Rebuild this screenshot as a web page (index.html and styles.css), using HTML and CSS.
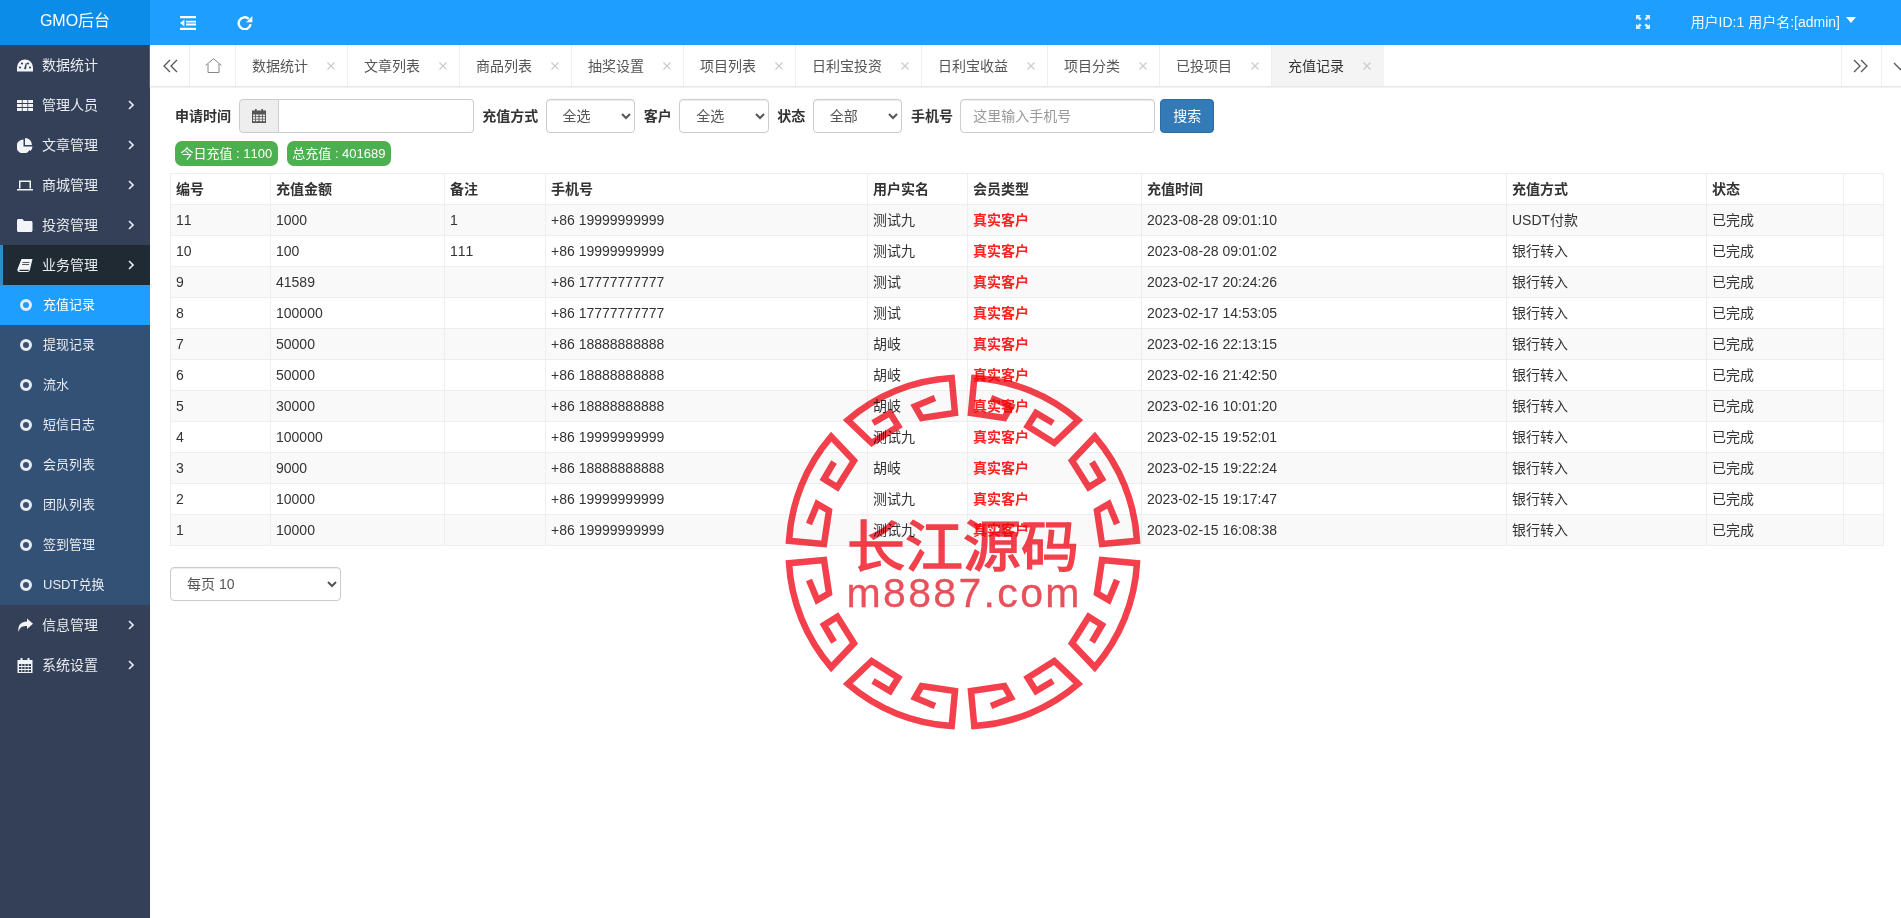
FILE: index.html
```html
<!DOCTYPE html>
<html lang="zh">
<head>
<meta charset="utf-8">
<title>GMO后台</title>
<link rel="stylesheet" href="styles.css">
</head>
<body>
<header class="topbar">
  <div class="logo">GMO后台</div>
  <button class="top-btn first-btn" type="button">
    <svg class="top-ico" viewBox="0 0 16 14"><path d="M0 0h16v2.200H0zM0 11.800h16V14H0zM6 4.700h10v1.900H6zM6 7.600h10v1.900H6zM4.400 3.600v6.800L0 7z"/></svg>
  </button>
  <button class="top-btn" type="button">
    <svg class="top-ico" viewBox="0 0 16 14"><path class="ico-arc" d="M13.600 8.300A6 6 0 1 1 11.800 2.900"/><path d="M15.400 0v6.300H9.200z"/></svg>
  </button>
  <div class="top-right">
    <svg class="full-ico" viewBox="0 0 14 14"><path d="M0 0h5L3.400 1.600 5.600 3.800 3.800 5.600 1.600 3.400 0 5zM14 0v5l-1.600-1.600-2.200 2.200-1.800-1.800 2.200-2.200L9 0zM0 14V9l1.600 1.600 2.200-2.200 1.800 1.800-2.200 2.200L5 14zM14 14H9l1.600-1.600-2.200-2.200 1.800-1.800 2.200 2.200L14 9z"/></svg>
    <span class="user">用户ID:1 用户名:[admin]</span>
    <span class="caret"></span>
  </div>
</header>
<div class="layout">
  <nav class="sidebar">
    <a class="nav-item"><svg class="ico" viewBox="0 0 16 12"><path d="M0 12C-.4 11 0 9.500 0 8a8 8 0 0 1 16 0c0 1.500.4 3 0 4z"/><circle class="cut" cx="3" cy="8" r="1.100"/><circle class="cut" cx="5" cy="4" r="1.100"/><circle class="cut" cx="11" cy="4" r="1.100"/><circle class="cut" cx="13" cy="8" r="1.100"/><path class="cut" d="M7 9.500 8.800 3.500 9.800 3.800 9 9.800z"/></svg><span>数据统计</span></a>
    <a class="nav-item"><svg class="ico" viewBox="0 0 16 11"><path d="M0 0h4.800v3H0zM5.600 0h4.800v3H5.600zM11.200 0H16v3h-4.800zM0 4h4.800v3H0zM5.600 4h4.800v3H5.600zM11.200 4H16v3h-4.800zM0 8h4.800v3H0zM5.600 8h4.800v3H5.600zM11.200 8H16v3h-4.800z"/></svg><span>管理人员</span><svg class="chev" viewBox="0 0 6 10"><path d="M1 1l4 4-4 4"/></svg></a>
    <a class="nav-item"><svg class="ico" viewBox="0 0 16 15"><path d="M6.500 1.500v7h7A7 7 0 1 1 6.500 1.500zM8 0a7 7 0 0 1 7 7H8zM8.500 8.500H15.500A7 7 0 0 1 13.500 13z"/></svg><span>文章管理</span><svg class="chev" viewBox="0 0 6 10"><path d="M1 1l4 4-4 4"/></svg></a>
    <a class="nav-item"><svg class="ico" viewBox="0 0 16 10"><path d="M2 0h12v8h-1.500V1.500h-9V8H2zM0 8.500h16V10H0z"/></svg><span>商城管理</span><svg class="chev" viewBox="0 0 6 10"><path d="M1 1l4 4-4 4"/></svg></a>
    <a class="nav-item"><svg class="ico" viewBox="0 0 16 13"><path d="M1.500 0h4L7 2h7c.8 0 1.500.7 1.500 1.500v8c0 .8-.7 1.500-1.500 1.500H1.500C.7 13 0 12.300 0 11.500v-10C0 .7.700 0 1.500 0z"/></svg><span>投资管理</span><svg class="chev" viewBox="0 0 6 10"><path d="M1 1l4 4-4 4"/></svg></a>
    <a class="nav-item nav-open"><svg class="ico" viewBox="0 0 16 13"><path d="M4.500 0H15.500L13 10.500c-.3 1.500-1 2.500-2.500 2.500H2.500C.8 13 0 11.500.5 10zM3 10.800c-.8 0-1 1.200 0 1.200h8c.6 0 .8-.5 1-1.200z"/><path class="cut" d="M5.500 3h7v.8h-7zM5 5h7v.8H5z"/></svg><span>业务管理</span><svg class="chev" viewBox="0 0 6 10"><path d="M1 1l4 4-4 4"/></svg></a>
    <div class="submenu">
      <a class="sub-item sub-active"><i class="ring"></i>充值记录</a>
      <a class="sub-item"><i class="ring"></i>提现记录</a>
      <a class="sub-item"><i class="ring"></i>流水</a>
      <a class="sub-item"><i class="ring"></i>短信日志</a>
      <a class="sub-item"><i class="ring"></i>会员列表</a>
      <a class="sub-item"><i class="ring"></i>团队列表</a>
      <a class="sub-item"><i class="ring"></i>签到管理</a>
      <a class="sub-item"><i class="ring"></i>USDT兑换</a>
    </div>
    <a class="nav-item"><svg class="ico" viewBox="0 0 16 14"><path d="M10 0l6 5.200-6 5.200V7.500C6 7.500 2.500 8 1.800 13.500.2 8.500 3 3.200 10 3.100z"/></svg><span>信息管理</span><svg class="chev" viewBox="0 0 6 10"><path d="M1 1l4 4-4 4"/></svg></a>
    <a class="nav-item"><svg class="ico" viewBox="0 0 15 15"><path fill-rule="evenodd" d="M3 0h2v2h5V0h2v2h3v13H0V2h3zM1.500 6v2h2.400V6zM4.700 6v2h2.400V6zM7.900 6v2h2.400V6zM11.100 6v2h2.400V6zM1.500 9v2h2.400V9zM4.700 9v2h2.400V9zM7.900 9v2h2.400V9zM11.100 9v2h2.400V9zM1.500 12v2h2.400v-2zM4.700 12v2h2.400v-2zM7.900 12v2h2.400v-2zM11.100 12v2h2.400v-2z"/></svg><span>系统设置</span><svg class="chev" viewBox="0 0 6 10"><path d="M1 1l4 4-4 4"/></svg></a>
  </nav>
  <main class="main">
    <div class="tabs">
      <div class="tab-tool tool-prev"><svg class="dbl" viewBox="0 0 15 14"><path d="M7 1 1 7l6 6M14 1 8 7l6 6"/></svg></div>
      <div class="tab-home"><svg class="home" viewBox="0 0 17 15"><path d="M.5 7.500 8.500.7l8 6.800M3 6v8.500h11V6"/></svg></div>
      <div class="tab">数据统计<svg class="x" viewBox="0 0 8 8"><path d="M.5.500l7 7M7.500.500l-7 7"/></svg></div>
      <div class="tab">文章列表<svg class="x" viewBox="0 0 8 8"><path d="M.5.500l7 7M7.500.500l-7 7"/></svg></div>
      <div class="tab">商品列表<svg class="x" viewBox="0 0 8 8"><path d="M.5.500l7 7M7.500.500l-7 7"/></svg></div>
      <div class="tab">抽奖设置<svg class="x" viewBox="0 0 8 8"><path d="M.5.500l7 7M7.500.500l-7 7"/></svg></div>
      <div class="tab">项目列表<svg class="x" viewBox="0 0 8 8"><path d="M.5.500l7 7M7.500.500l-7 7"/></svg></div>
      <div class="tab">日利宝投资<svg class="x" viewBox="0 0 8 8"><path d="M.5.500l7 7M7.500.500l-7 7"/></svg></div>
      <div class="tab">日利宝收益<svg class="x" viewBox="0 0 8 8"><path d="M.5.500l7 7M7.500.500l-7 7"/></svg></div>
      <div class="tab">项目分类<svg class="x" viewBox="0 0 8 8"><path d="M.5.500l7 7M7.500.500l-7 7"/></svg></div>
      <div class="tab">已投项目<svg class="x" viewBox="0 0 8 8"><path d="M.5.500l7 7M7.500.500l-7 7"/></svg></div>
      <div class="tab tab-active">充值记录<svg class="x" viewBox="0 0 8 8"><path d="M.5.500l7 7M7.500.500l-7 7"/></svg></div>
      <div class="tab-tool tool-next"><svg class="dbl" viewBox="0 0 15 14"><path d="M1 1l6 6-6 6M8 1l6 6-6 6"/></svg></div>
      <div class="tab-tool tool-down"><svg class="dbl" viewBox="0 0 15 14"><path d="M1 4l6.500 6.500L14 4"/></svg></div>
    </div>
    <section class="content">
      <form class="filters">
        <label class="flabel flabel-first">申请时间</label>
        <div class="date-group">
          <span class="addon"><svg class="cal" viewBox="0 0 14 14"><path fill-rule="evenodd" d="M3 0h1.600v1.600h4.800V0H11v1.600h3V14H0V1.600h3zM1 5.500v1.700h2.200V5.500zM4 5.500v1.700h2.500V5.500zM7.500 5.500v1.700H10V5.500zM10.800 5.500v1.700H13V5.500zM1 8v1.700h2.200V8zM4 8v1.700h2.500V8zM7.500 8v1.700H10V8zM10.800 8v1.700H13V8zM1 10.500v1.700h2.200v-1.700zM4 10.500v1.700h2.500v-1.700zM7.500 10.500v1.700H10v-1.700zM10.800 10.500v1.700H13v-1.700z"/></svg></span>
          <input class="date-input" type="text">
        </div>
        <label class="flabel">充值方式</label>
        <select class="control sel"><option>全选</option></select>
        <label class="flabel">客户</label>
        <select class="control sel"><option>全选</option></select>
        <label class="flabel">状态</label>
        <select class="control sel"><option>全部</option></select>
        <label class="flabel">手机号</label>
        <input class="control phone" type="text" placeholder="这里输入手机号">
        <button class="search" type="button">搜索</button>
      </form>
      <div class="badges">
        <span class="badge">今日充值 : 1100</span>
        <span class="badge">总充值 : 401689</span>
      </div>
      <table class="grid">
        <colgroup><col class="c1"><col class="c2"><col class="c3"><col class="c4"><col class="c5"><col class="c6"><col class="c7"><col class="c8"><col class="c9"><col class="c10"></colgroup>
        <thead><tr><th>编号</th><th>充值金额</th><th>备注</th><th>手机号</th><th>用户实名</th><th>会员类型</th><th>充值时间</th><th>充值方式</th><th>状态</th><th></th></tr></thead>
        <tbody>
          <tr><td>11</td><td>1000</td><td>1</td><td>+86 19999999999</td><td>测试九</td><td class="real">真实客户</td><td>2023-08-28 09:01:10</td><td>USDT付款</td><td>已完成</td><td></td></tr>
          <tr><td>10</td><td>100</td><td>111</td><td>+86 19999999999</td><td>测试九</td><td class="real">真实客户</td><td>2023-08-28 09:01:02</td><td>银行转入</td><td>已完成</td><td></td></tr>
          <tr><td>9</td><td>41589</td><td></td><td>+86 17777777777</td><td>测试</td><td class="real">真实客户</td><td>2023-02-17 20:24:26</td><td>银行转入</td><td>已完成</td><td></td></tr>
          <tr><td>8</td><td>100000</td><td></td><td>+86 17777777777</td><td>测试</td><td class="real">真实客户</td><td>2023-02-17 14:53:05</td><td>银行转入</td><td>已完成</td><td></td></tr>
          <tr><td>7</td><td>50000</td><td></td><td>+86 18888888888</td><td>胡岐</td><td class="real">真实客户</td><td>2023-02-16 22:13:15</td><td>银行转入</td><td>已完成</td><td></td></tr>
          <tr><td>6</td><td>50000</td><td></td><td>+86 18888888888</td><td>胡岐</td><td class="real">真实客户</td><td>2023-02-16 21:42:50</td><td>银行转入</td><td>已完成</td><td></td></tr>
          <tr><td>5</td><td>30000</td><td></td><td>+86 18888888888</td><td>胡岐</td><td class="real">真实客户</td><td>2023-02-16 10:01:20</td><td>银行转入</td><td>已完成</td><td></td></tr>
          <tr><td>4</td><td>100000</td><td></td><td>+86 19999999999</td><td>测试九</td><td class="real">真实客户</td><td>2023-02-15 19:52:01</td><td>银行转入</td><td>已完成</td><td></td></tr>
          <tr><td>3</td><td>9000</td><td></td><td>+86 18888888888</td><td>胡岐</td><td class="real">真实客户</td><td>2023-02-15 19:22:24</td><td>银行转入</td><td>已完成</td><td></td></tr>
          <tr><td>2</td><td>10000</td><td></td><td>+86 19999999999</td><td>测试九</td><td class="real">真实客户</td><td>2023-02-15 19:17:47</td><td>银行转入</td><td>已完成</td><td></td></tr>
          <tr><td>1</td><td>10000</td><td></td><td>+86 19999999999</td><td>测试九</td><td class="real">真实客户</td><td>2023-02-15 16:08:38</td><td>银行转入</td><td>已完成</td><td></td></tr>
        </tbody>
      </table>
      <select class="control per-page"><option>每页 10</option></select>
    </section>
  </main>
</div>
<svg class="stamp" viewBox="-180 -180 360 360">
  <defs>
    <path id="key" d="M-28-154-48-145.700-41.300-134-8-139-11.300-174A174.500 174.500 0 0 0-115.300-131.800L-91.300-109-64.700-125.700-73-139-90-129"/>
  </defs>
  <g class="stamp-lines">
    <use href="#key"/>
    <use href="#key" transform="matrix(-1 0 0 1 0 0)"/>
    <use href="#key" transform="matrix(1 0 0 -1 0 0)"/>
    <use href="#key" transform="matrix(-1 0 0 -1 0 0)"/>
    <use href="#key" transform="matrix(0 1 1 0 0 0)"/>
    <use href="#key" transform="matrix(0 1 -1 0 0 0)"/>
    <use href="#key" transform="matrix(0 -1 1 0 0 0)"/>
    <use href="#key" transform="matrix(0 -1 -1 0 0 0)"/>
  </g>
  <text class="stamp-cn" x="0" y="14" text-anchor="middle" textLength="232" lengthAdjust="spacingAndGlyphs">长江源码</text>
  <text class="stamp-en" x="0" y="55" text-anchor="middle" textLength="233">m8887.com</text>
</svg>
</body>
</html>
```
FILE: styles.css
```css
* { box-sizing: border-box; }
html, body { margin: 0; height: 100%; }
body {
  position: relative;
  height: 918px;
  overflow: hidden;
  background: #fff;
  color: #333;
  font: 14px/20px "Liberation Sans", "Noto Sans CJK SC", sans-serif;
  font-kerning: none;
}
.topbar {
  display: flex;
  align-items: center;
  height: 45px;
  background: #1e9fff;
  color: #fff;
}
.logo {
  align-self: stretch;
  width: 150px;
  padding-top: 11px;
  background: #0a8ce8;
  font-size: 16px;
  text-align: center;
}
.top-btn {
  display: flex;
  width: 16px;
  height: 14px;
  margin: 0 0 0 41px;
  padding: 0;
  border: 0;
  background: none;
}
.first-btn { margin-left: 30px; }
.top-ico { width: 16px; height: 14px; fill: #fff; }
.ico-arc { fill: none; stroke: #fff; stroke-width: 2.400; }
.top-right {
  display: flex;
  align-items: center;
  margin: -2px 0 0 auto;
  padding-right: 45px;
}
.full-ico { width: 14px; height: 14px; margin-right: 41px; fill: #dcefff; }
.user { color: #f2f8ff; }
.caret {
  width: 0;
  height: 0;
  margin: -3px 0 0 6px;
  border: 5px solid transparent;
  border-top: 6px solid #fff;
  border-bottom: 0;
}
.layout { display: flex; height: 873px; }
.sidebar {
  flex: none;
  width: 150px;
  background: #344058;
  color: #e8ebf0;
}
.nav-item {
  display: flex;
  align-items: center;
  height: 40px;
  padding: 0 16px 0 17px;
}
.nav-open { padding-left: 14px; border-left: 3px solid #2f8ccb; background: #1f2a33; }
.ico { flex: none; width: 16px; height: 15px; margin-right: 9px; fill: #f2f4f7; }
.cut { fill: #344058; }
.nav-open .cut { fill: #1f2a33; }
.chev {
  width: 6px;
  height: 10px;
  margin-left: auto;
  fill: none;
  stroke: #e8ebf0;
  stroke-width: 1.600;
}
.submenu { background: #335075; }
.sub-item {
  display: flex;
  align-items: center;
  height: 40px;
  padding-left: 20px;
  font-size: 13px;
}
.sub-active { background: #1e9fff; color: #fff; }
.ring {
  width: 12px;
  height: 12px;
  margin-right: 11px;
  border: 3px solid #e8ecf2;
  border-radius: 50%;
}
.main { flex: 1; min-width: 0; }
.tabs {
  display: flex;
  height: 42px;
  overflow: hidden;
  border-bottom: 1px solid #e8e8e8;
  box-shadow: 0 1px 1px #f2f2f2;
  color: #555;
}
.tab-tool {
  display: flex;
  flex: none;
  align-items: center;
  width: 40px;
  padding-left: 13px;
  border-right: 1px solid #eee;
}
.tool-next { width: 41px; margin-left: auto; padding-left: 11px; border-left: 1px solid #eee; }
.tool-down { margin-right: -21px; padding-left: 11px; border-right: 0; }
.dbl { width: 15px; height: 14px; fill: none; stroke: #555; stroke-width: 1.300; }
.tab-home {
  display: flex;
  flex: none;
  align-items: center;
  width: 46px;
  padding-left: 15px;
  border-right: 1px solid #eee;
}
.home { width: 17px; height: 15px; fill: none; stroke: #888; stroke-width: 1; }
.tab {
  display: flex;
  flex: none;
  align-items: center;
  padding: 0 12px 0 16px;
  border-right: 1px solid #eee;
}
.tab-active { border-right: 0; background: #f4f4f4; color: #333; padding-right: 13px; }
.x { width: 8px; height: 8px; margin-left: 19px; fill: none; stroke: #ccc; stroke-width: 1.200; }
.content { padding: 12px 18px 0 20px; }
.filters { display: flex; align-items: center; padding-left: 5px; }
.flabel { margin: 0 7.400px 0 8.700px; font-weight: 700; color: #333; }
.flabel-first { margin: 0 8px 0 0; }
.date-group { display: flex; width: 234.500px; height: 34px; }
.addon {
  display: flex;
  flex: none;
  align-items: center;
  justify-content: center;
  width: 40px;
  border: 1px solid #ccc;
  border-radius: 4px 0 0 4px;
  background: #eee;
}
.cal { width: 14px; height: 14px; fill: #555; }
.date-input {
  flex: 1;
  min-width: 0;
  border: 1px solid #ccc;
  border-left: 0;
  border-radius: 0 4px 4px 0;
}
.control {
  height: 34px;
  padding: 6px 12px;
  border: 1px solid #ccc;
  border-radius: 4px;
  background: #fff;
  color: #555;
  font: 14px/20px "Liberation Sans", "Noto Sans CJK SC", sans-serif;
  box-shadow: inset 0 1px 1px rgba(0, 0, 0, .075);
}
.sel { width: 89.500px; }
.phone { width: 195px; }
.phone::placeholder { color: #999; }
.search {
  width: 54px;
  height: 34px;
  margin: -1px 0 0 5px;
  padding: 0;
  border: 1px solid #2e6da4;
  border-radius: 4px;
  background: #337ab7;
  color: #fff;
  font: 14px/20px "Liberation Sans", "Noto Sans CJK SC", sans-serif;
}
.badges { display: flex; gap: 9px; margin: 8px 0 7px 5px; }
.badge {
  height: 25px;
  padding: 0 5.500px;
  border-radius: 7px;
  background: #4caf50;
  color: #fff;
  font-size: 13px;
  line-height: 25px;
}
.grid {
  width: 1713px;
  table-layout: fixed;
  border-collapse: collapse;
  border: 1px solid #eee;
}
.c1, .c5 { width: 100px; }
.c2, .c6 { width: 174px; }
.c3 { width: 101px; }
.c4 { width: 322px; }
.c7 { width: 365px; }
.c8 { width: 200px; }
.c9 { width: 137px; }
.c10 { width: 40px; }
.grid th, .grid td {
  height: 31px;
  padding: 0 5px;
  border: 1px solid #eee;
  text-align: left;
  white-space: nowrap;
}
.grid tbody tr:nth-child(odd) { background: #f9f9f9; }
.grid .real { color: #f22; font-weight: 700; }
.per-page { display: block; width: 171px; margin-top: 21px; }
.stamp {
  position: absolute;
  left: 783px;
  top: 372px;
  width: 360px;
  height: 360px;
  mix-blend-mode: multiply;
  pointer-events: none;
}
.stamp-lines use {
  fill: none;
  stroke: #f4404c;
  stroke-width: 6.500;
  stroke-linejoin: miter;
}
.stamp-cn {
  fill: #f4404c;
  stroke: #f4404c;
  stroke-width: 1.500;
  font-family: "Noto Sans CJK SC", sans-serif;
  font-size: 55px;
  font-weight: 400;
}
.stamp-en {
  fill: #e8505c;
  stroke: #e8505c;
  stroke-width: .3;
  font-family: "Liberation Sans", sans-serif;
  font-size: 41px;
}
```
